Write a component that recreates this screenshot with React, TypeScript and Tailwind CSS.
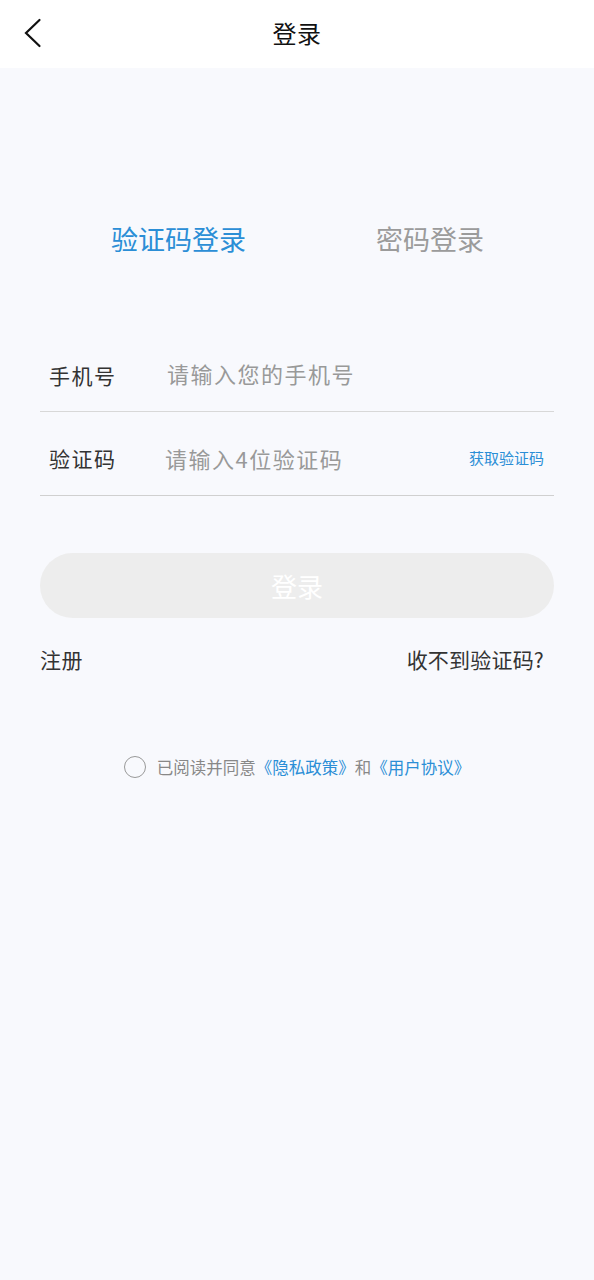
import React from "react";

const font = { fontFamily: '"Noto Sans CJK SC", "Noto Sans", sans-serif' };

export default function App() {
  return (
    <div className="w-[594px] min-h-[1280px] bg-[#f8f9fd] flex flex-col" style={font}>
      <div className="h-[68px] bg-white relative flex items-center justify-center">
        <svg className="absolute left-[20px] top-[16px]" width="26" height="34" viewBox="0 0 26 34" fill="none">
          <path d="M19.5 4 L6 17 L19.5 30" stroke="#111" strokeWidth="2.2" strokeLinecap="round" strokeLinejoin="miter" />
        </svg>
        <span className="text-[24px] leading-none text-[#111] -mt-[2px] tracking-[0.5px]">登录</span>
      </div>

      <div className="flex pt-[151px] pl-[111px] gap-[130px]">
        <span className="text-[27px] leading-[40px] text-[#2b8ed6]">验证码登录</span>
        <span className="text-[27px] leading-[40px] text-[#9b9b9b]">密码登录</span>
      </div>

      <div className="px-[40px] pt-[69px]">
        <div className="h-[84px] flex items-center border-b border-[#d8d8d8] pt-[8px]">
          <span className="w-[118px] pl-[9px] text-[21px] tracking-[1.5px] text-[#333] pt-[4px]">手机号</span>
          <span className="text-[22px] tracking-[1.5px] text-[#999] ml-[9px]">请输入您的手机号</span>
        </div>
        <div className="h-[84px] flex items-center border-b border-[#d0d0d0] pt-[10px]">
          <span className="w-[118px] pl-[9px] text-[21px] tracking-[1.5px] text-[#333]">验证码</span>
          <span className="text-[22px] tracking-[1.5px] text-[#999] ml-[7px] flex-1">请输入4位验证码</span>
          <span className="text-[15px] text-[#2b8ed6] mr-[10px]">获取验证码</span>
        </div>
      </div>

      <div className="px-[40px] pt-[57px]">
        <div className="h-[65px] rounded-full bg-[#ededed] flex items-center justify-center">
          <span className="text-[26px] text-white">登录</span>
        </div>
        <div className="flex justify-between mt-[26px] pr-[10px]">
          <span className="text-[21px] tracking-[0.5px] text-[#333]">注册</span>
          <span className="text-[21px] tracking-[0.2px] text-[#333]">收不到验证码?</span>
        </div>
      </div>

      <div className="flex items-center justify-center pt-[79px]">
        <div className="w-[22px] h-[22px] rounded-full border-[1.5px] border-[#999] mr-[11px]" />
        <span className="text-[16.5px] text-[#888]">
          已阅读并同意<span className="text-[#2b8ed6]">《隐私政策》</span>和<span className="text-[#2b8ed6]">《用户协议》</span>
        </span>
      </div>
    </div>
  );
}
